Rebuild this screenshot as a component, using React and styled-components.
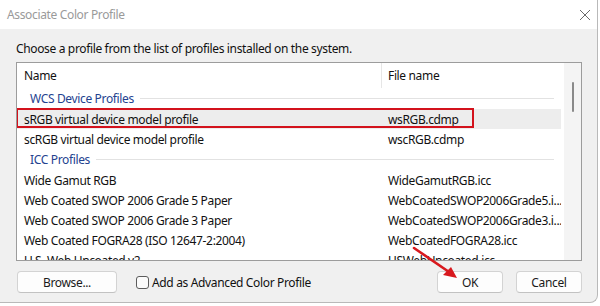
import React from "react";
import styled, { createGlobalStyle } from "styled-components";

const Global = createGlobalStyle`
  html, body { margin: 0; padding: 0; background: #ffffff; }
  body { font-family: "Noto Sans", "Open Sans", sans-serif; font-size: 12px; letter-spacing: -0.35px; color: #1a1a1a; }
  * { box-sizing: border-box; }
`;

const Page = styled.div`
  position: relative;
  width: 600px;
  height: 306px;
  overflow: hidden;
  background: #fff;
`;

const Window = styled.div`
  width: 598px;
  height: 303px;
  background: #f0f0f0;
  border-right: 1px solid #b9b9b9;
  border-bottom: 1px solid #b9b9b9;
  border-bottom-right-radius: 8px;
  display: flex;
  flex-direction: column;
  overflow: hidden;
`;

const TitleBar = styled.div`
  height: 29px;
  flex: none;
  background: #ffffff;
  display: flex;
  align-items: center;
  justify-content: space-between;
  padding: 0 6px 0 7px;
`;

const Title = styled.span`
  color: #9a9a9a;
  font-size: 12px;
`;

const Body = styled.div`
  flex: 1;
  display: flex;
  flex-direction: column;
  padding: 12px 15px 0 16px;
`;

const Prompt = styled.div`
  line-height: 16px;
  height: 16px;
  color: #111;
  margin-bottom: 5px;
`;

const List = styled.div`
  height: 199px;
  border: 1px solid #9c9c9c;
  background: #fff;
  display: flex;
  overflow: hidden;
`;

const Content = styled.div`
  flex: 1;
  display: flex;
  flex-direction: column;
`;

const Header = styled.div`
  height: 25px;
  flex: none;
  display: grid;
  grid-template-columns: 365px 1fr;
`;

const HeadCell = styled.div`
  display: flex;
  align-items: center;
  padding-left: ${(p) => p.$pad}px;
  border-right: 1px solid ${(p) => (p.$divider ? "#e6e6e6" : "transparent")};
  color: #111;
`;

const GroupRow = styled.div`
  height: 21px;
  flex: none;
  display: flex;
  align-items: center;
  padding: 0 10px 0 13px;
  color: #23428f;
  &::after {
    content: "";
    flex: 1;
    height: 1px;
    background: #e2e2e2;
    margin-left: 6px;
  }
`;

const Row = styled.div`
  position: relative;
  height: 20px;
  flex: none;
  display: grid;
  grid-template-columns: 365px 1fr;
  align-items: center;
  margin-right: 3px;
  background: ${(p) => (p.$selected ? "#ededed" : "transparent")};
  color: #111;
  white-space: nowrap;
`;

const Cell = styled.span`
  padding-left: ${(p) => p.$pad}px;
  overflow: hidden;
`;

const Highlight = styled.div`
  position: absolute;
  left: -1px;
  top: -1px;
  width: 458px;
  height: 20px;
  border: 2.5px solid #d3121c;
  pointer-events: none;
`;

const ScrollTrack = styled.div`
  width: 17px;
  flex: none;
  background: #f4f4f4;
  display: flex;
  flex-direction: column;
  align-items: center;
  padding-top: 19px;
`;

const Thumb = styled.div`
  width: 2px;
  height: 30px;
  border-radius: 1px;
  background: #8a8a8a;
`;

const Footer = styled.div`
  display: flex;
  align-items: center;
  margin-top: 10px;
  height: 22px;
`;

const Button = styled.button`
  width: ${(p) => p.$w}px;
  height: 22px;
  margin-left: ${(p) => p.$ml || 0}px;
  border: 1px solid #d3d3d3;
  border-bottom-color: #c2c2c2;
  border-radius: 4px;
  background: #fdfdfd;
  font-family: inherit;
  font-size: 12px;
  letter-spacing: inherit;
  color: #1a1a1a;
  padding: 0;
`;

const CheckLabel = styled.label`
  display: flex;
  align-items: center;
  margin-left: 19px;
  gap: 3px;
  color: #111;
  flex: 1;
`;

const Box = styled.span`
  width: 13px;
  height: 13px;
  border: 1px solid #5c5c5c;
  border-radius: 3px;
  background: #fbfbfb;
`;

const Arrow = styled.svg`
  position: absolute;
  left: 405px;
  top: 240px;
  pointer-events: none;
`;

const profiles = [
  ["Wide Gamut RGB", "WideGamutRGB.icc"],
  ["Web Coated SWOP 2006 Grade 5 Paper", "WebCoatedSWOP2006Grade5.i..."],
  ["Web Coated SWOP 2006 Grade 3 Paper", "WebCoatedSWOP2006Grade3.i..."],
  ["Web Coated FOGRA28 (ISO 12647-2:2004)", "WebCoatedFOGRA28.icc"],
  ["U.S. Web Uncoated v2", "USWebUncoated.icc"],
];

export default function App() {
  return (
    <Page>
      <Global />
      <Window>
        <TitleBar>
          <Title>Associate Color Profile</Title>
          <svg width="12" height="12" viewBox="0 0 12 12">
            <path d="M1 1 L11 11 M11 1 L1 11" stroke="#6a6a6a" strokeWidth="1" fill="none" />
          </svg>
        </TitleBar>
        <Body>
          <Prompt>Choose a profile from the list of profiles installed on the system.</Prompt>
          <List>
            <Content>
              <Header>
                <HeadCell $pad={7} $divider>Name</HeadCell>
                <HeadCell $pad={6}>File name</HeadCell>
              </Header>
              <GroupRow>WCS Device Profiles</GroupRow>
              <Row $selected>
                <Cell $pad={7}>sRGB virtual device model profile</Cell>
                <Cell $pad={6}>wsRGB.cdmp</Cell>
                <Highlight />
              </Row>
              <Row>
                <Cell $pad={7}>scRGB virtual device model profile</Cell>
                <Cell $pad={6}>wscRGB.cdmp</Cell>
              </Row>
              <GroupRow>ICC Profiles</GroupRow>
              {profiles.map(([n, f]) => (
                <Row key={n}>
                  <Cell $pad={7}>{n}</Cell>
                  <Cell $pad={6}>{f}</Cell>
                </Row>
              ))}
            </Content>
            <ScrollTrack>
              <Thumb />
            </ScrollTrack>
          </List>
          <Footer>
            <Button $w={100} $ml={1}>Browse...</Button>
            <CheckLabel>
              <Box />
              Add as Advanced Color Profile
            </CheckLabel>
            <Button $w={66}>OK</Button>
            <Button $w={66} $ml={13}>Cancel</Button>
          </Footer>
        </Body>
      </Window>
      <Arrow width="60" height="45" viewBox="0 0 60 45">
        <path d="M9 8 L47 34" stroke="#d8191e" strokeWidth="2.6" strokeLinecap="round" fill="none" />
        <path d="M52 38 L38 35 L46 27 Z" fill="#d8191e" />
      </Arrow>
    </Page>
  );
}
